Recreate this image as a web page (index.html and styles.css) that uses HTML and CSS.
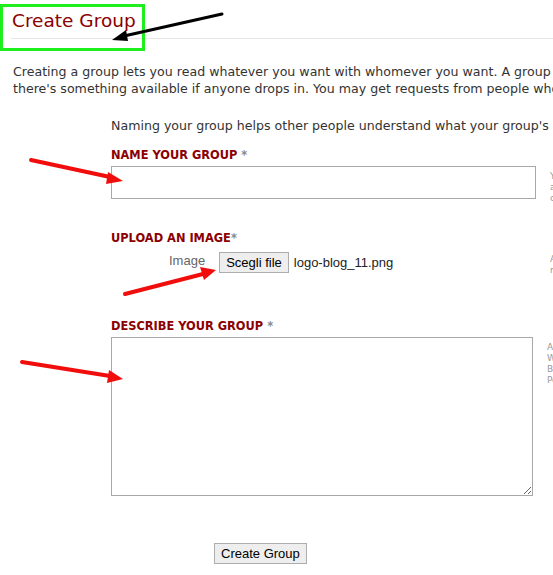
FILE: index.html
```html
<!DOCTYPE html>
<html lang="en">
<head>
    <meta charset="UTF-8">
    <meta name="viewport" content="width=device-width, initial-scale=1.0">
    <title>Create Group</title>
    <link rel="stylesheet" href="styles.css">
</head>
<body>
    <div class="page">
        <h1 class="page-title">Create Group</h1>

        <p class="intro">
            Creating a group lets you read whatever you want with whomever you want. A group is a place to hang out,<br>
            there's something available if anyone drops in. You may get requests from people who want to join.
        </p>

        <form class="group-form">
            <p class="form-lead">Naming your group helps other people understand what your group's about.</p>

            <!-- Name -->
            <div class="field">
                <label class="field-label" for="group-name">NAME YOUR GROUP <span class="req">*</span></label>
                <div class="field-row">
                    <input type="text" id="group-name" class="text-input">
                    <div class="hint">You can change<br>anytime after<br>creating it</div>
                </div>
            </div>

            <!-- Image -->
            <div class="field field-upload">
                <label class="field-label">UPLOAD AN IMAGE<span class="req">*</span></label>
                <div class="field-row">
                    <div class="upload">
                        <span class="upload-label">Image</span>
                        <button type="button" class="file-btn">Scegli file</button>
                        <span class="file-name">logo-blog_11.png</span>
                    </div>
                    <div class="hint">A picture<br>makes it</div>
                </div>
            </div>

            <!-- Description -->
            <div class="field field-desc">
                <label class="field-label" for="group-desc">DESCRIBE YOUR GROUP <span class="req">*</span></label>
                <div class="field-row">
                    <textarea id="group-desc" class="text-area"></textarea>
                    <div class="hint">A short<br>What you<br>Books<br>People</div>
                </div>
            </div>

            <div class="actions">
                <button type="button" class="submit-btn">Create Group</button>
            </div>
        </form>
    </div>

    <!-- screenshot annotations -->
    <svg class="marks" width="553" height="575" viewBox="0 0 553 575">
        <rect x="1.5" y="5.5" width="142" height="44" fill="none" stroke="#1eee1e" stroke-width="3"/>
        <g stroke-linecap="round">
            <line x1="222" y1="14" x2="124" y2="36" stroke="#000" stroke-width="3"/>
            <line x1="31" y1="160" x2="110" y2="177" stroke="#f20d0d" stroke-width="4"/>
            <line x1="125" y1="294" x2="203" y2="274" stroke="#f20d0d" stroke-width="4"/>
            <line x1="22" y1="362" x2="110" y2="376" stroke="#f20d0d" stroke-width="4"/>
        </g>
        <polygon points="112,40 126,30 128,41" fill="#000"/>
        <polygon points="123,181 108,172 106,184" fill="#f20d0d"/>
        <polygon points="216,270 200,267 204,280" fill="#f20d0d"/>
        <polygon points="123,379 109,370 107,383" fill="#f20d0d"/>
    </svg>
</body>
</html>
```

FILE: styles.css
```css
body {
    margin: 0;
    font-family: "DejaVu Sans", Verdana, sans-serif;
    font-size: 12.6px;
    color: #333;
    background: #fff;
    overflow: hidden;
}
.page {
    width: 553px;
    overflow: hidden;
}
.page-title {
    margin: 0 0 0 11px;
    padding: 10px 0 6px 1px;
    font-size: 18.5px;
    line-height: 22px;
    font-weight: normal;
    color: #8b0000;
    border-bottom: 1px solid #e6e6e6;
}
.intro {
    margin: 24px 0 0 13px;
    white-space: nowrap;
    line-height: 17px;
}
.group-form {
    margin: 21px 0 0 111px;
}
.form-lead {
    margin: 0;
    white-space: nowrap;
    line-height: 15px;
}
.field {
    margin-top: 15px;
}
.field-upload {
    margin-top: 27px;
}
.field-desc {
    margin-top: 43px;
}
.field-label {
    display: block;
    font-weight: bold;
    font-size: 11.4px;
    color: #8b0000;
    margin-bottom: 4px;
}
.req {
    color: #888;
    font-weight: bold;
}
.field-row {
    display: flex;
    gap: 14px;
    width: 600px;
}
.text-input {
    box-sizing: border-box;
    width: 425px;
    height: 33px;
    margin: 0;
    border: 1px solid #a8a8a8;
}
.text-area {
    box-sizing: border-box;
    width: 422px;
    height: 159px;
    margin: 0;
    border: 1px solid #a8a8a8;
    resize: both;
}
.hint {
    font-size: 9px;
    line-height: 11px;
    color: #999;
    padding-top: 5px;
}
.upload {
    display: flex;
    align-items: center;
    gap: 5px;
    width: 425px;
    padding-left: 58px;
    box-sizing: border-box;
    font-family: "Liberation Sans", Arial, sans-serif;
    font-size: 13px;
}
.upload-label {
    color: #666;
    margin-right: 9px;
    position: relative;
    top: -2px;
}
.file-btn, .submit-btn {
    font-family: "Liberation Sans", Arial, sans-serif;
    font-size: 13px;
    color: #000;
    background: #eee;
    border: 1px solid #adadad;
    padding: 2px 6px;
    height: 21px;
}
.file-name {
    color: #222;
}
.actions {
    margin-top: 47px;
    padding-left: 103px;
}
.marks {
    position: absolute;
    top: 0;
    left: 0;
    pointer-events: none;
}
```
